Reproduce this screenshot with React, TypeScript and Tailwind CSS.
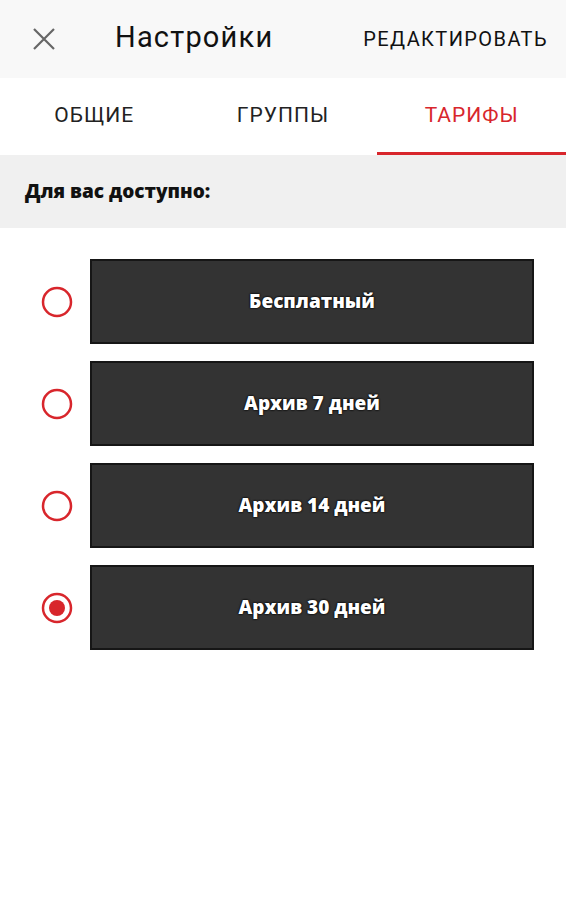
import { useState } from "react";

const tabs = ["ОБЩИЕ", "ГРУППЫ", "ТАРИФЫ"];
const plans = ["Бесплатный", "Архив 7 дней", "Архив 14 дней", "Архив 30 дней"];

function Radio({ checked }: { checked: boolean }) {
	return (
		<svg width="34" height="34" viewBox="0 0 34 34" className="shrink-0">
			<circle cx="17" cy="17" r="14" fill="none" stroke="#d8262c" strokeWidth="2.5" />
			{checked && <circle cx="17" cy="17" r="8" fill="#d8262c" />}
		</svg>
	);
}

export default function App() {
	const [activeTab, setActiveTab] = useState(2);
	const [selected, setSelected] = useState(3);

	return (
		<div className="min-h-screen bg-white font-['Roboto',sans-serif]">
			{/* Top bar */}
			<div className="flex h-[78px] items-center bg-[#f8f8f8] pl-[32px] pr-[18px]">
				<svg width="24" height="24" viewBox="0 0 24 24" className="shrink-0">
					<path d="M2 2L22 22M22 2L2 22" stroke="#666" strokeWidth="2.2" fill="none" />
				</svg>
				<h1 className="ml-[59px] pb-[2px] text-[29px] tracking-[1.2px] text-[#111]">Настройки</h1>
				<button className="ml-auto text-[20px] tracking-[1.4px] text-[#111]">
					РЕДАКТИРОВАТЬ
				</button>
			</div>

			{/* Tabs */}
			<div className="grid h-[77px] grid-cols-3 bg-white">
				{tabs.map((t, i) => (
					<button
						key={t}
						onClick={() => setActiveTab(i)}
						className={`flex items-center justify-center border-b-[3px] pt-[2px] text-[21px] tracking-[1px] ${
							activeTab === i ? "border-[#d8262c] text-[#d8262c]" : "border-transparent text-[#222]"
						}`}
					>
						{t}
					</button>
				))}
			</div>

			{/* Section header */}
			<div className="flex h-[73px] items-center bg-[#f0f0f0] px-[25px]">
				<span className="font-['Open_Sans',sans-serif] text-[19px] font-extrabold text-[#111]">
					Для вас доступно:
				</span>
			</div>

			{/* Plans */}
			<div className="flex flex-col gap-[17px] pl-[40px] pr-[32px] pt-[31px]">
				{plans.map((p, i) => (
					<div key={p} className="flex items-center gap-[16px]" onClick={() => setSelected(i)}>
						<Radio checked={selected === i} />
						<div className="flex h-[85px] flex-1 items-center justify-center border-2 border-[#161616] bg-[#333333]">
							<span className="font-['Open_Sans',sans-serif] text-[19px] font-extrabold text-white [text-shadow:0_0_2px_#000,0_0_2px_#000]">
								{p}
							</span>
						</div>
					</div>
				))}
			</div>
		</div>
	);
}
